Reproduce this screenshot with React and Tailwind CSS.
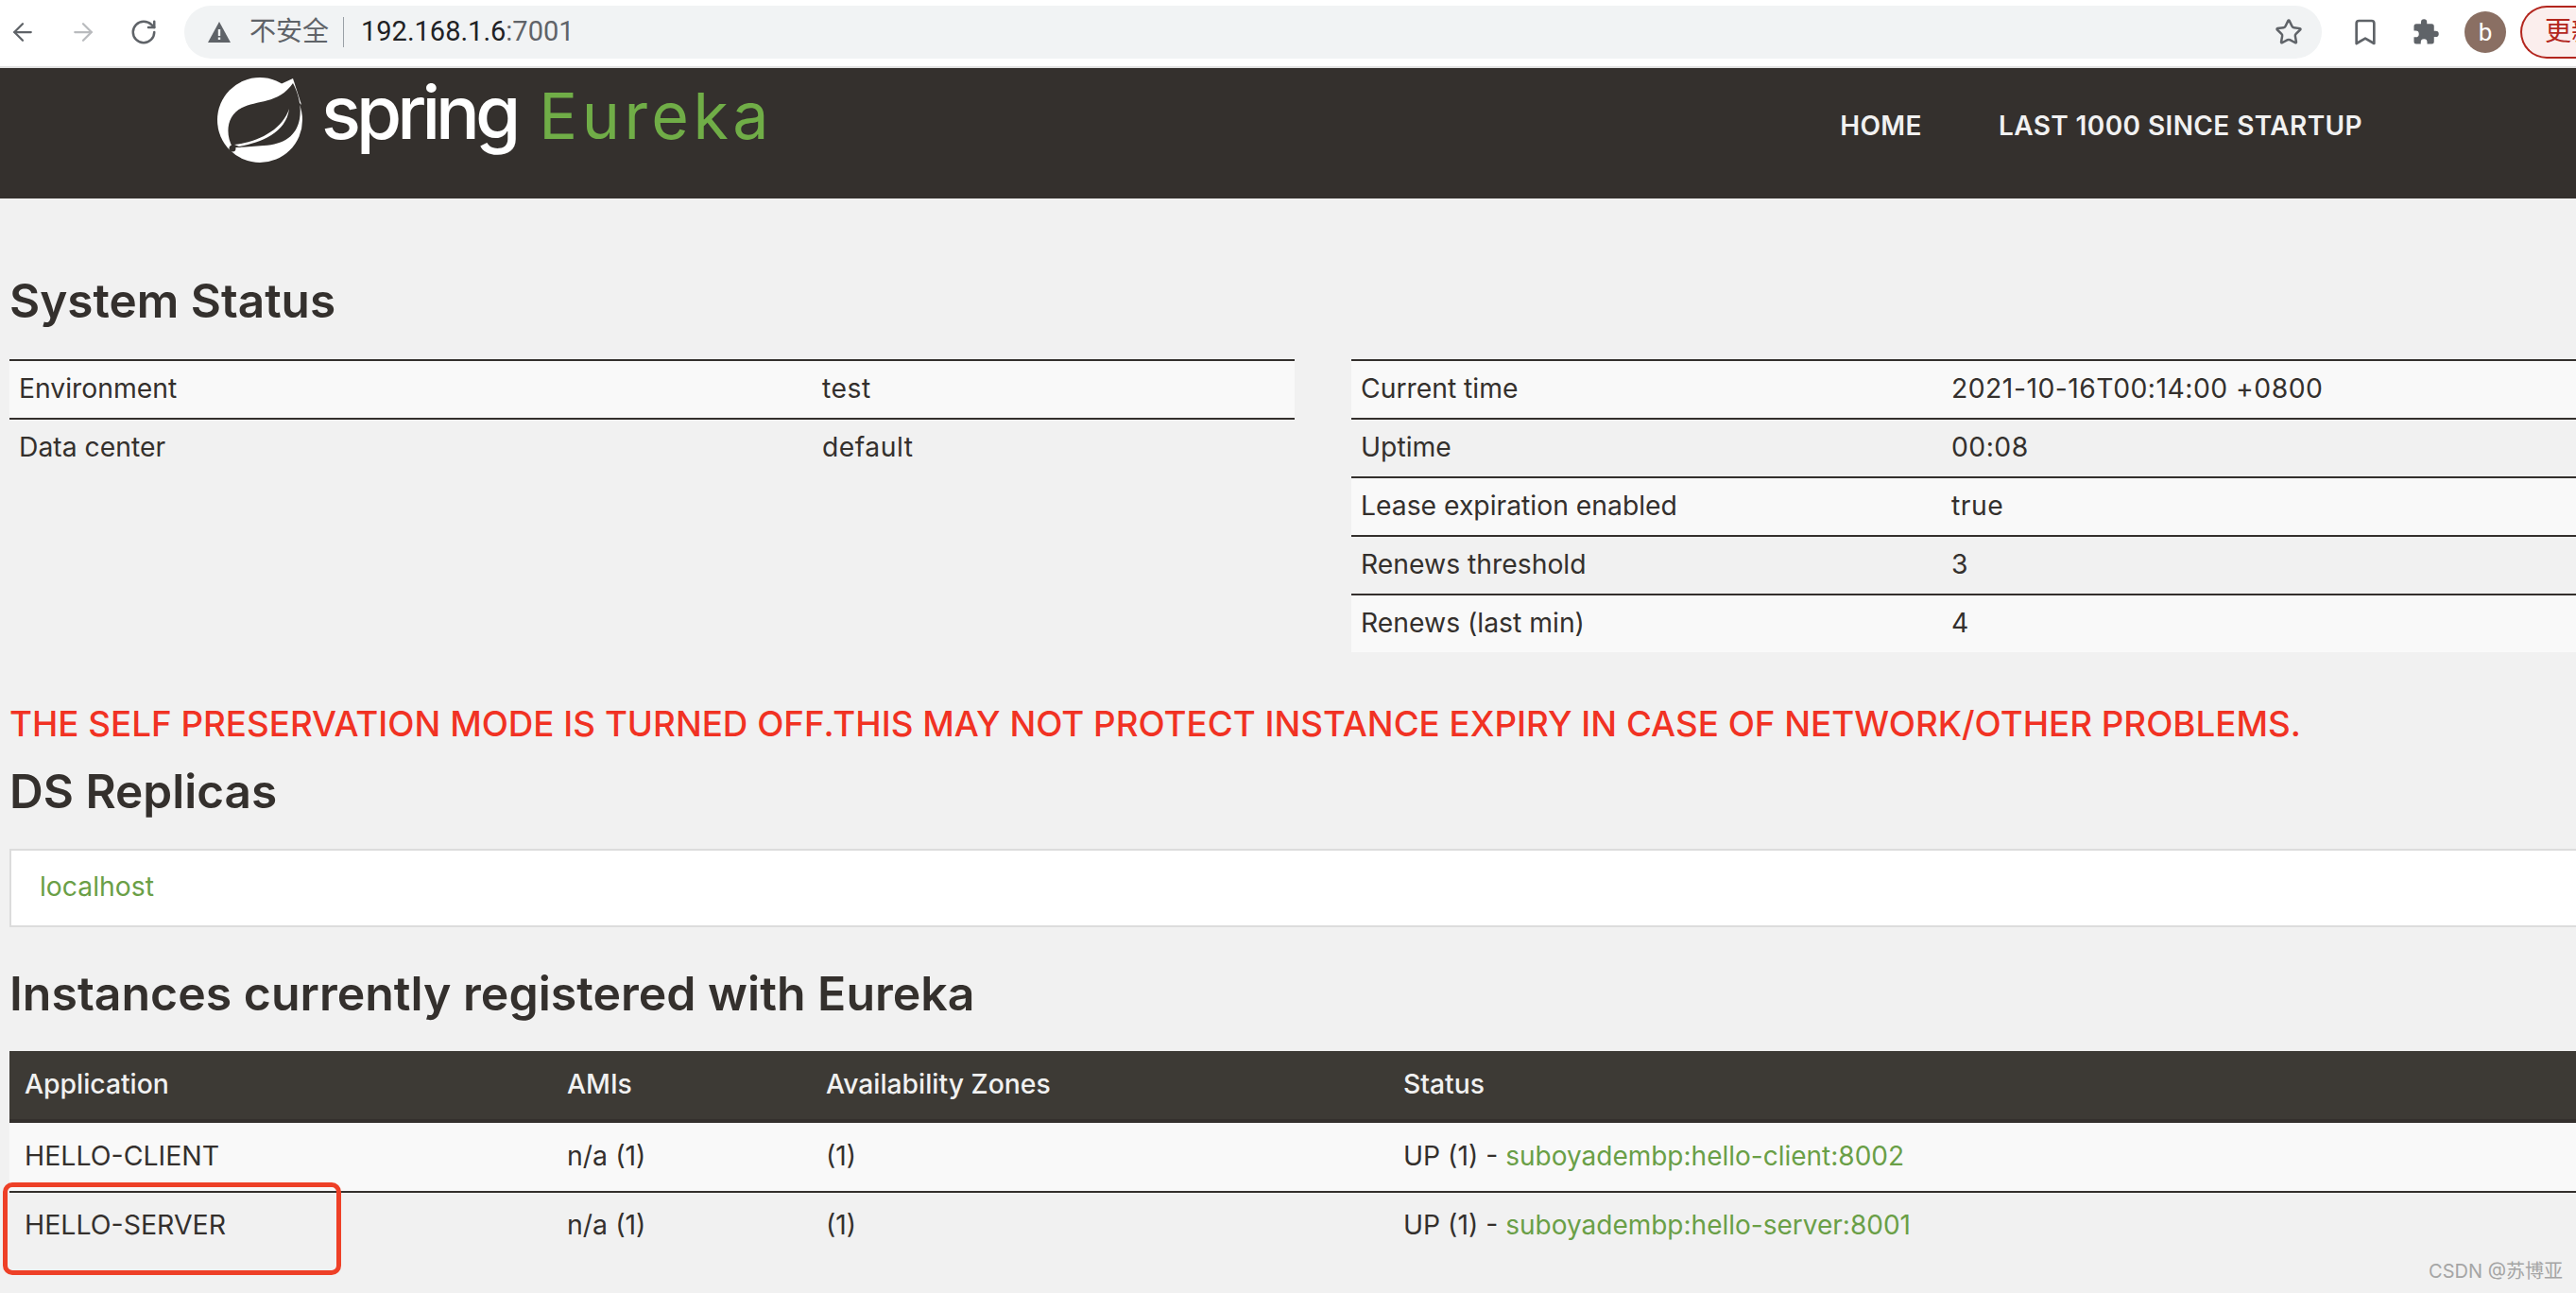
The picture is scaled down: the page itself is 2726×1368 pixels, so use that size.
import { ArrowLeft, ArrowRight, RotateCw, Star, Bookmark } from "lucide-react";

const envRows = [
  ["Environment", "test"],
  ["Data center", "default"],
];

const statusRows = [
  ["Current time", "2021-10-16T00:14:00 +0800"],
  ["Uptime", "00:08"],
  ["Lease expiration enabled", "true"],
  ["Renews threshold", "3"],
  ["Renews (last min)", "4"],
];

const instances = [
  ["HELLO-CLIENT", "suboyadembp:hello-client:8002"],
  ["HELLO-SERVER", "suboyadembp:hello-server:8001"],
];

const SpringLeaf = () => (
  <svg width="92" height="92" viewBox="0 0 92 92">
    <circle cx="46" cy="46" r="45" fill="#fff" />
    <path d="M68 8 L81 2 L90 30 Z" fill="#fff" />
    <path
      d="M17 75C9 60 11 41 27 33C42 25 66 29 81 7C88 20 90 34 88 45C85 62 72 72 50 73C38 74 25 75 17 75Z"
      fill="#34302d"
    />
    <path d="M19 72C45 69 70 56 77 34C74 60 46 70 24 74Z" fill="#fff" />
    <circle cx="17" cy="76" r="3.500" fill="#34302d" />
  </svg>
);

const BrowserBar = () => (
  <div className="h-[72px] flex items-start bg-white border-b-2 border-[#e2e2e2] font-['Roboto','Noto_Sans_CJK_SC',sans-serif]">
    <div className="flex items-center h-[68px] pl-[9px] gap-[34px] text-[#5f6368]">
      <ArrowLeft size={30} strokeWidth={1.8} />
      <ArrowRight size={30} strokeWidth={1.8} className="text-[#b9bbbe]" />
      <RotateCw size={30} strokeWidth={2} />
    </div>
    <div className="mt-[6px] ml-[28px] w-[2262px] h-[56px] shrink-0 bg-[#f1f3f4] rounded-full flex items-center pl-[25px] pr-[20px]">
      <svg width="24" height="22" viewBox="0 0 24 22">
        <path d="M12 0 L24 22 H0 Z" fill="#5f6368" />
        <rect x="10.800" y="8" width="2.400" height="7" fill="#f1f3f4" />
        <rect x="10.800" y="16.500" width="2.400" height="2.500" fill="#f1f3f4" />
      </svg>
      <span className="ml-[20px] text-[28px] text-[#5f6368]">不安全</span>
      <span className="ml-[15px] w-[1px] h-[32px] bg-[#9aa0a6]" />
      <span className="ml-[18px] text-[29px] text-[#202124]">
        192.168.1.6<span className="text-[#5f6368]">:7001</span>
      </span>
      <Star size={30} strokeWidth={2} className="ml-auto text-[#5f6368]" />
    </div>
    <div className="flex items-center h-[68px] ml-[30px]">
      <Bookmark size={32} strokeWidth={2} className="text-[#5f6368] shrink-0" />
      <svg width="30" height="30" viewBox="0 0 24 24" className="ml-[33px] shrink-0">
        <path
          d="M20.500 11H19V7a2 2 0 0 0-2-2h-4V3.500a2.500 2.500 0 0 0-5 0V5H4a2 2 0 0 0-2 2v3.800h1.500a2.700 2.700 0 0 1 0 5.400H2V20a2 2 0 0 0 2 2h3.800v-1.500a2.700 2.700 0 0 1 5.400 0V22H17a2 2 0 0 0 2-2v-4h1.500a2.500 2.500 0 0 0 0-5z"
          fill="#5f6368"
        />
      </svg>
      <div className="ml-[26px] w-[44px] h-[44px] shrink-0 rounded-full bg-[#8a6f63] text-white text-[26px] flex items-center justify-center">
        b
      </div>
      <div className="ml-[15px] w-[120px] h-[56px] shrink-0 rounded-l-full border-2 border-r-0 border-[#b3261e] bg-[#fbeeed] text-[#b3261e] text-[28px] flex items-center pl-[24px] whitespace-nowrap">
        更新
      </div>
    </div>
  </div>
);

const NavBar = () => (
  <div className="h-[138px] bg-[#34302d] flex items-start">
    <div className="ml-[229px] mt-[9px]">
      <SpringLeaf />
    </div>
    <div className="ml-[19px] mt-[2px] h-[90px] flex items-baseline font-['Inter',sans-serif]">
      <span className="text-[78px] leading-[90px] tracking-[-5px] font-medium text-white">spring</span>
      <span className="ml-[24px] text-[68px] leading-[90px] tracking-[4.500px] text-[#70ad47]">Eureka</span>
    </div>
    <div className="ml-auto mr-[226px] h-[122px] flex items-center gap-[81px] text-[28px] tracking-[0.4px] font-semibold text-[#f1f1f1]">
      <span>HOME</span>
      <span>LAST 1000 SINCE STARTUP</span>
    </div>
  </div>
);

const InfoTable = ({ rows, labelWidth, className }) => (
  <div className={className}>
    {rows.map(([label, value], i) => (
      <div
        key={label}
        className={`h-[62px] flex items-center border-t-2 border-[#34302d] pl-[10px] pb-[2px] ${
          i % 2 === 0 ? "bg-[#f9f9f9]" : ""
        }`}
      >
        <span className={labelWidth}>{label}</span>
        <span className="tracking-[0.5px]">{value}</span>
      </div>
    ))}
  </div>
);

export default function App() {
  return (
    <div className="w-[2726px] h-[1368px] overflow-hidden relative bg-[#f1f1f1] text-[#34302d] text-[28.300px] font-['Inter','Noto_Sans_CJK_SC',sans-serif]">
      <BrowserBar />
      <NavBar />

      <div className="pl-[10px]">
        <h2 className="mt-[78px] text-[49.500px] leading-[60px] font-semibold">System Status</h2>

        <div className="mt-[32px] flex">
          <InfoTable rows={envRows} labelWidth="w-[850px]" className="w-[1360px]" />
          <InfoTable rows={statusRows} labelWidth="w-[625px]" className="w-[1296px] ml-[60px]" />
        </div>

        <div className="mt-[54px] text-[36.750px] leading-[44px] font-medium text-[#f13223] whitespace-nowrap">
          THE SELF PRESERVATION MODE IS TURNED OFF.THIS MAY NOT PROTECT INSTANCE EXPIRY IN CASE OF NETWORK/OTHER PROBLEMS.
        </div>

        <h2 className="mt-[19px] text-[49.500px] leading-[60px] font-semibold">DS Replicas</h2>

        <div className="mt-[31px] w-[2760px] h-[83px] pb-[2px] bg-white border-2 border-[#dcdcdc] flex items-center pl-[30px] text-[#6a9f47]">
          localhost
        </div>

        <h2 className="mt-[40px] text-[50px] leading-[60px] font-semibold">
          Instances currently registered with Eureka
        </h2>

        <div className="mt-[31px] h-[76px] pb-[2px] bg-[#3d3a35] border-b-4 border-[#34302d] flex items-center pl-[16px] text-[#f1f1f1] font-medium">
          <span className="w-[574px]">Application</span>
          <span className="w-[274px]">AMIs</span>
          <span className="w-[611px]">Availability Zones</span>
          <span>Status</span>
        </div>

        {instances.map(([app, link], i) => (
          <div
            key={app}
            className={`flex pl-[16px] ${
              i === 0 ? "h-[74px] pt-[14px] bg-[#f9f9f9] border-b-2 border-[#34302d]" : "pt-[13px]"
            }`}
          >
            <span className="w-[574px] text-[28.500px]">{app}</span>
            <span className="w-[274px] text-[28.500px]">n/a (1)</span>
            <span className="w-[611px]">(1)</span>
            <span>
              UP (1) - <span className="text-[#6a9f47] text-[28px]">{link}</span>
            </span>
          </div>
        ))}
      </div>

      {/* annotation over the screenshot */}
      <div className="absolute left-[3px] top-[1251px] w-[358px] h-[98px] rounded-[10px] border-[5px] border-[#ee4027]" />
      <div className="absolute right-[14px] bottom-[8px] text-[20px] text-[#a5a5a5]">CSDN @苏博亚</div>
    </div>
  );
}
